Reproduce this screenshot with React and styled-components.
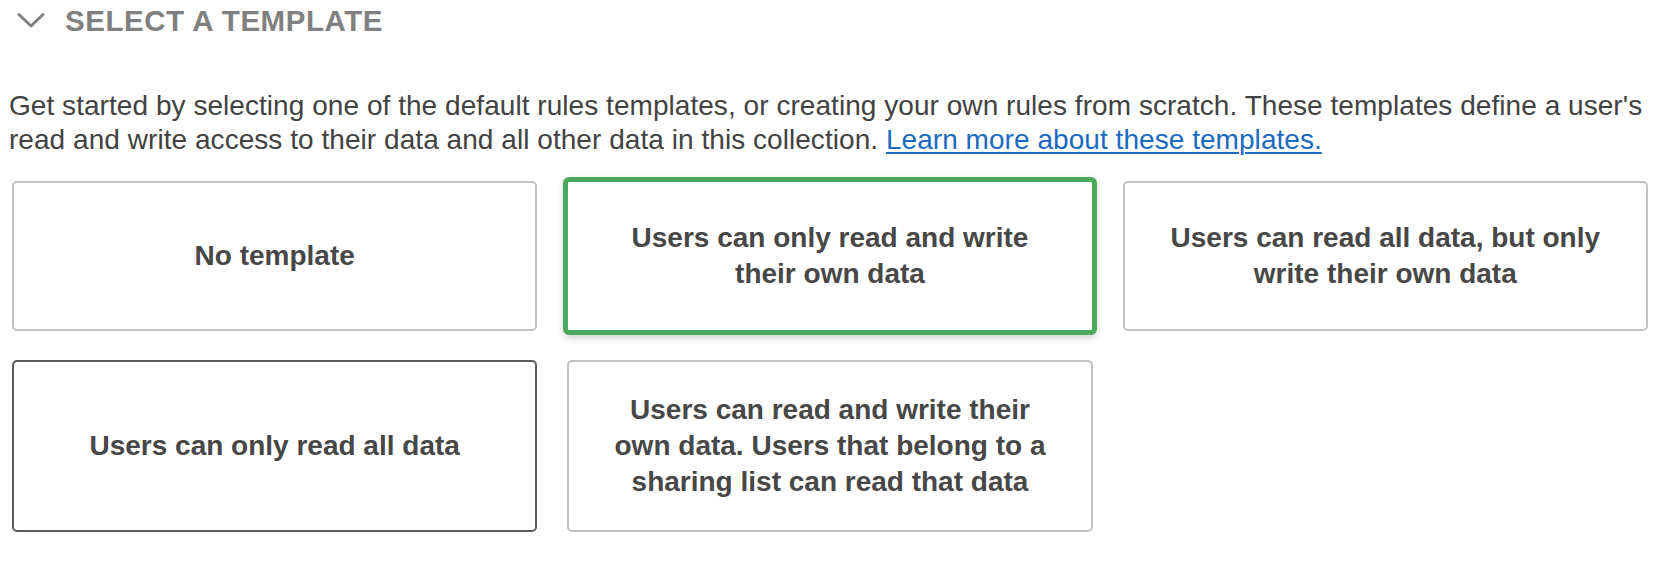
import React, { useState } from 'react';
import styled, { createGlobalStyle, css } from 'styled-components';

// ── Global ────────────────────────────────────────────────────────────────────
const GlobalStyle = createGlobalStyle`
  html, body {
    margin: 0;
    padding: 0;
    background: #fff;
  }
  body {
    font-family: "Liberation Sans", Arial, sans-serif;
    -webkit-font-smoothing: antialiased;
  }
`;

// ── Styled ────────────────────────────────────────────────────────────────────
const Section = styled.section`
  padding: 1px 12px 0 9px;
`;

const Header = styled.button`
  display: flex;
  align-items: center;
  gap: 20px;
  height: 40px;
  padding: 0 0 0 8px;
  border: none;
  background: none;
  cursor: pointer;
  color: #808080;
  font-family: "Liberation Sans", Arial, sans-serif;
  font-size: 29.5px;
  font-weight: 700;
  letter-spacing: 0.55px;
  line-height: 40px;
  text-transform: uppercase;
`;

const Chevron = styled.svg`
  width: 28px;
  height: 17px;
  flex-shrink: 0;
  margin-top: -1px;
`;

const Intro = styled.p`
  margin: 48px 0 0;
  font-size: 28px;
  line-height: 34px;
  letter-spacing: 0.05px;
  color: #424242;
`;

const Link = styled.a`
  color: #1b6ac1;
  text-decoration: underline;
  text-underline-offset: 3px;
  text-decoration-thickness: 2px;
`;

const Grid = styled.div`
  display: grid;
  grid-template-columns: repeat(3, 1fr);
  column-gap: 30px;
  row-gap: 29px;
  margin: 24px 0 0 3px;
`;

const Card = styled.button`
  box-sizing: border-box;
  min-height: 150px;
  padding: 30px 38px;
  display: flex;
  align-items: center;
  justify-content: center;
  text-align: center;
  background: #fff;
  border: 2px solid #c2c2c2;
  border-radius: 5px;
  cursor: pointer;
  font-family: "Liberation Sans", Arial, sans-serif;
  font-size: 28px;
  font-weight: 700;
  line-height: 36px;
  color: #474747;

  ${p => p.$hover && css`
    border-color: #5b5b5b;
  `}

  ${p => p.$selected && css`
    margin: -4px;
    border: 5px solid #4ca85c;
    border-radius: 6px;
    box-shadow: 0 3px 7px rgba(0, 0, 0, 0.18);
  `}
`;

// ── Data ──────────────────────────────────────────────────────────────────────
const templates = [
  { id: 'none', label: 'No template' },
  { id: 'own', label: 'Users can only read and write their own data' },
  { id: 'readAll', label: 'Users can read all data, but only write their own data' },
  { id: 'readOnly', label: 'Users can only read all data' },
  {
    id: 'sharing',
    label: 'Users can read and write their own data. Users that belong to a sharing list can read that data',
  },
];

// ── Component ─────────────────────────────────────────────────────────────────
const App = () => {
  const [selected, setSelected] = useState('own');

  return (
    <>
      <GlobalStyle />
      <Section>
        <Header type="button">
          <Chevron viewBox="0 0 28 17" fill="none">
            <path d="M2 2.5 L14 14 L26 2.5" stroke="#808080" strokeWidth="3" strokeLinecap="round" strokeLinejoin="round" />
          </Chevron>
          Select a template
        </Header>

        <Intro>
          Get started by selecting one of the default rules templates, or creating your own rules from
          scratch. These templates define a user's read and write access to their data and all other data
          in this collection. <Link href="#">Learn more about these templates.</Link>
        </Intro>

        <Grid>
          {templates.map(t => (
            <Card
              key={t.id}
              type="button"
              $selected={selected === t.id}
              $hover={t.id === 'readOnly'}
              onClick={() => setSelected(t.id)}
            >
              {t.label}
            </Card>
          ))}
        </Grid>
      </Section>
    </>
  );
};

export default App;
